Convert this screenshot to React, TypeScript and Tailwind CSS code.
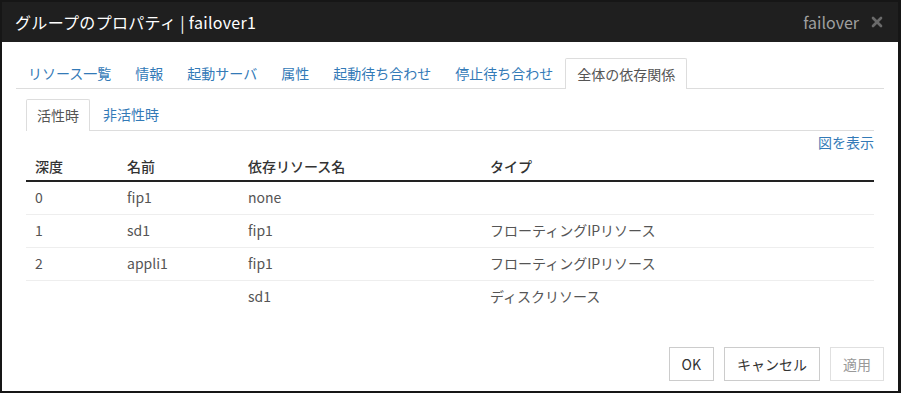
import { X } from 'lucide-react';

const font = { fontFamily: '"Noto Sans CJK JP", "Liberation Sans", sans-serif' };

const mainTabs = ['リソース一覧', '情報', '起動サーバ', '属性', '起動待ち合わせ', '停止待ち合わせ'];

const rows = [
  { depth: '0', name: 'fip1', dep: 'none', type: '' },
  { depth: '1', name: 'sd1', dep: 'fip1', type: 'フローティングIPリソース' },
  { depth: '2', name: 'appli1', dep: 'fip1', type: 'フローティングIPリソース' },
  { depth: '', name: '', dep: 'sd1', type: 'ディスクリソース' },
];

export default function App() {
  return (
    <div className="w-[901px] h-[393px] bg-[#161616] pt-[2px] pl-[2px] pr-[3px] pb-[2px] overflow-hidden" style={font}>
      <div className="flex flex-col h-full bg-white">
        {/* Header */}
        <div className="h-[40px] bg-[#1f1f1f] flex items-center px-[13px]">
          <span className="text-[16px] text-white tracking-[0.02em]">グループのプロパティ&nbsp;|&nbsp;failover1</span>
          <span className="ml-auto text-[16px] text-[#a0a0a0]">failover</span>
          <X className="ml-[10px] size-[16px] text-[#6a6a6a]" strokeWidth={4} />
        </div>

        <div className="flex-1 flex flex-col px-[14px] pt-[16px]">
          {/* Main tabs */}
          <div className="flex items-end border-b border-[#dddddd] h-[31px] text-[14px]">
            {mainTabs.map((t) => (
              <div key={t} className="px-[12px] h-[30px] flex items-center text-[#337ab7]">{t}</div>
            ))}
            <div className="px-[11px] h-[31px] -mb-px flex items-center text-[#555] bg-white border border-b-0 border-[#dddddd] rounded-t-[2px]">全体の依存関係</div>
          </div>

          <div className="px-[10px] pt-[10px]">
            {/* Sub tabs */}
            <div className="flex items-end border-b border-[#dddddd] h-[32px] text-[14px]">
              <div className="px-[10px] h-[32px] -mb-px flex items-center text-[#555] bg-white border border-b-0 border-[#dddddd] rounded-t-[2px]">活性時</div>
              <div className="px-[13px] h-[31px] flex items-center text-[#337ab7]">非活性時</div>
            </div>

            <div className="flex justify-end h-[20px] items-center mt-[1px] text-[14px] text-[#337ab7]">図を表示</div>

            {/* Table */}
            <div className="text-[14px] text-[#555]">
              <div className="flex items-center h-[30px] border-b-2 border-[#222] text-[#333] font-medium">
                <div className="w-[101px] pl-[9px]">深度</div>
                <div className="w-[121px]">名前</div>
                <div className="w-[242px]">依存リソース名</div>
                <div className="flex-1">タイプ</div>
              </div>
              {rows.map((r, i) => (
                <div key={i} className={`flex items-center h-[33px] pb-[2px] ${i < rows.length - 1 ? 'border-b border-[#eeeeee]' : ''}`}>
                  <div className="w-[101px] pl-[9px]">{r.depth}</div>
                  <div className="w-[121px]">{r.name}</div>
                  <div className="w-[242px]">{r.dep}</div>
                  <div className="flex-1">{r.type}</div>
                </div>
              ))}
            </div>
          </div>

          {/* Footer buttons */}
          <div className="mt-auto mb-[10px] flex justify-end gap-[10px] text-[14px]">
            <button className="h-[34px] px-[12px] border border-[#cccccc] text-[#333] bg-white">OK</button>
            <button className="h-[34px] px-[12px] border border-[#cccccc] text-[#333] bg-white">キャンセル</button>
            <button className="h-[34px] px-[12px] border border-[#e0e0e0] text-[#999] bg-white">適用</button>
          </div>
        </div>
      </div>
    </div>
  );
}
